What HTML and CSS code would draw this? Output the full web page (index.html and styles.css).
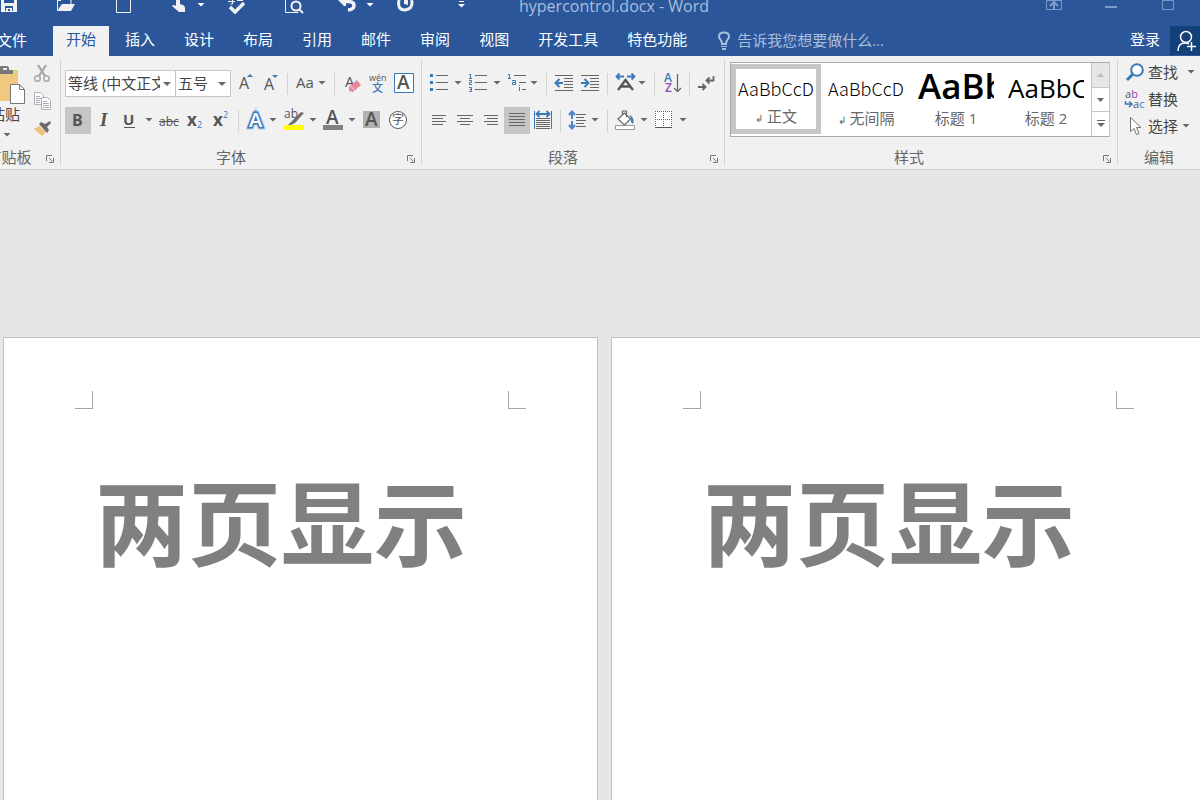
FILE: index.html
```html
<!DOCTYPE html>
<html lang="zh-CN">
<head>
<meta charset="utf-8">
<title>hypercontrol.docx - Word</title>
<link rel="stylesheet" href="styles.css">
</head>
<body>
<svg class="defs" width="0" height="0" aria-hidden="true"><defs>
  <path id="caret" d="M-3.5 0h7L0 3.5z"/>
  <g id="launch" fill="none" stroke="#777"><path d="M.5 6V.5H6"/><path d="M3 3l3.500 3.500"/><path d="M7.500 3v4.500H3"/></g>
</defs></svg>

<header class="titlebar">
  <div class="quick">
    <button aria-label="保存"><svg viewBox="-20 0 57 14"><path fill="#f1f1f1" d="M1 0h3v3h10V0h3v12H1z"/><path fill="#2b579a" d="M5 6h8v5H5z"/><path fill="#f1f1f1" d="M6 8h6v3h-2V9H8v2H6z"/></svg></button>
    <button aria-label="打开"><svg viewBox="37 0 57 14"><path fill="none" stroke="#f1f1f1" d="M57.500 0v10.500M57 .5h4M70 0h1v4"/><path fill="#f1f1f1" d="M62 4h13l-4 7H57z"/></svg></button>
    <button aria-label="新建"><svg viewBox="94 0 57 14"><path fill="none" stroke="#f1f1f1" d="M116.500 0v12.500h14V0"/></svg></button>
    <button aria-label="触摸模式"><svg viewBox="151 0 57 14"><path fill="#f1f1f1" d="M176 0h4v4l3 1q2 1 2 3v4h-6l-7-6q1-2 4 0z"/><use href="#caret" x="201" y="3" fill="#fff"/></svg></button>
    <button aria-label="拼写检查"><svg viewBox="208 0 57 14"><path fill="none" stroke="#f1f1f1" stroke-width="3.500" d="M230 7l5 5 9-9"/><path fill="none" stroke="#f1f1f1" d="M228 1.500h7M232.500 0v4h-2M237 .5h6"/></svg></button>
    <button aria-label="打印预览"><svg viewBox="265 0 57 14"><path fill="none" stroke="#f1f1f1" d="M285.500 0v12.500h13"/><circle cx="296" cy="6" r="4.500" fill="none" stroke="#f1f1f1" stroke-width="2"/><path stroke="#f1f1f1" stroke-width="2" d="M299 9l4 4"/></svg></button>
    <button aria-label="撤消"><svg viewBox="322 0 57 14"><path fill="#f1f1f1" d="M338 0h8v6h-2z"/><path fill="none" stroke="#f1f1f1" stroke-width="3.500" d="M344 1.500h4q6 0 6 4 0 4-6 4.500"/><use href="#caret" x="370" y="3" fill="#fff"/></svg></button>
    <button aria-label="重复"><svg viewBox="379 0 57 14"><path fill="none" stroke="#f1f1f1" stroke-width="3" d="M399 0q-2 10 6 10 7-1 7-7 0-2-1-3"/><path fill="#f1f1f1" d="M404 0h4v5l-4-1z"/></svg></button>
    <button aria-label="自定义快速访问工具栏"><svg viewBox="436 0 57 14"><path stroke="#fff" d="M459 1.500h5"/><path fill="#fff" d="M458 4h7l-3.500 3.500z"/></svg></button>
  </div>
  <h1>hypercontrol.docx - Word</h1>
  <div class="window">
    <button aria-label="功能区显示选项"><svg viewBox="1025 0 57 14"><path fill="none" stroke="#7f9cc8" d="M1046.500 .5h15v9h-15z"/><path stroke="#7f9cc8" stroke-width="2" fill="none" d="M1054 9V2M1050 6l4-4 4 4"/></svg></button>
    <button aria-label="最小化"><svg viewBox="1082 0 57 14"><path fill="#7f9cc8" d="M1105 6h12v2h-12z"/></svg></button>
    <button aria-label="最大化"><svg viewBox="1139 0 57 14"><path fill="none" stroke="#7f9cc8" d="M1162.500 .5h11v9h-11z"/></svg></button>
  </div>
</header>

<nav class="tabs">
  <button class="tab file">文件</button>
  <button class="tab active">开始</button>
  <button class="tab">插入</button>
  <button class="tab">设计</button>
  <button class="tab">布局</button>
  <button class="tab">引用</button>
  <button class="tab">邮件</button>
  <button class="tab">审阅</button>
  <button class="tab">视图</button>
  <button class="tab">开发工具</button>
  <button class="tab">特色功能</button>
  <label class="tell">
    <svg width="14" height="20" viewBox="0 0 14 20"><path fill="none" stroke="#a9bedd" stroke-width="2" d="M5 13q0-3-2-5-1-1-1-2.500Q2 1.500 7 1.500t5 4Q12 7 11 8 9 10 9 13z"/><path fill="#a9bedd" d="M4 15h6v1H4zM5 17h4v2H5z"/></svg>
    <input type="text" aria-label="告诉我您想要做什么" placeholder="告诉我您想要做什么...">
  </label>
  <button class="signin">登录</button>
  <button class="share" aria-label="共享"><svg width="30" height="29" viewBox="1170 26 30 29"><g fill="none" stroke="#fff" stroke-width="1.500"><circle cx="1186" cy="37" r="5.500"/><path d="M1178 51q0-8 7-8 3 0 4 1M1191.500 42v9M1187 46.500h9"/></g></svg></button>
</nav>

<main class="ribbon">
  <section class="group clipboard">
    <div class="body">
      <button class="paste"><svg width="46" height="42" viewBox="-18 62 46 42"><path fill="#efc97f" d="M-12 68h30v31h-30z"/><path fill="#777" d="M-5 68h18v4H-5zM-2 66q0-2 4-2h4q3 0 3 2v3H-2z"/><path fill="#f1f1f1" d="M3 66h4v2H3z"/><path fill="#fff" stroke="#777" d="M10.500 82.500h9l5 5v14h-14z"/><path fill="none" stroke="#777" d="M19.500 82.500v5h5"/></svg><span>粘贴</span><svg width="46" height="10" viewBox="-18 126 46 10"><use href="#caret" x="7" y="131" fill="#666"/></svg></button>
      <div class="stack">
        <button aria-label="剪切"><svg width="26" height="27" viewBox="29 60 26 27"><g fill="none" stroke="#a9a9a9" stroke-width="1.500"><circle cx="37.500" cy="78.500" r="2.800"/><circle cx="46.500" cy="78.500" r="2.800"/></g><path stroke="#a9a9a9" stroke-width="2.300" d="M38 65l7 11M46 65l-7 11"/></svg></button>
        <button aria-label="复制"><svg width="26" height="27" viewBox="29 87 26 27"><g fill="#fff" stroke="#b0b0b0"><path d="M34.500 92.500h6l3 3v9h-9z"/><path d="M41.500 97.500h6l3 3v9h-9z"/></g><path fill="none" stroke="#b0a6b8" d="M36 96.500h4M36 98.500h5M36 100.500h4M36 102.500h4M43 101.500h4M43 103.500h6M43 105.500h6M43 107.500h6"/></svg></button>
        <button aria-label="格式刷"><svg width="26" height="27" viewBox="29 114 26 27"><path fill="#efc27c" d="M34 129l5-3 7 6-4 4z"/><path fill="#6b6b6b" d="M39 124l2-2 4 2 5-3 1 2-4 4 2 3-2 3z"/></svg></button>
      </div>
    </div>
    <footer><h2>剪贴板</h2><button class="launch" aria-label="剪贴板设置"><svg width="9" height="9"><use href="#launch"/></svg></button></footer>
  </section>

  <section class="group font">
    <div class="row">
      <span class="combo family"><select aria-label="字体"><option>等线 (中文正文)</option></select></span>
      <span class="combo size"><select aria-label="字号"><option>五号</option></select></span>
      <button aria-label="增大字号"><svg width="25" height="27" viewBox="235 70 25 27"><text class="g md" x="239" y="89" font-size="16">A</text><path fill="#3b78b8" d="M247 77l3-3 3 3z"/></svg></button>
      <button aria-label="减小字号"><svg width="25" height="27" viewBox="260 70 25 27"><text class="g md" x="264" y="90" font-size="16">A</text><path fill="#3b78b8" d="M272 75h6l-3 3z"/></svg></button>
      <i class="sep"></i>
      <button aria-label="更改大小写"><svg width="42" height="27" viewBox="290 70 42 27"><text class="g md" x="296" y="88" font-size="15">Aa</text><use href="#caret" x="322" y="81"/></svg></button>
      <i class="sep"></i>
      <button aria-label="清除格式"><svg width="27" height="27" viewBox="337 70 27 27"><text class="g md" x="345" y="87" font-size="15">A</text><path fill="#e8879a" d="M349 87l8-7 4 5-8 7-4-1z"/><path stroke="#f7d5dc" d="M351 86l4 5"/></svg></button>
      <button aria-label="拼音指南"><svg width="26" height="27" viewBox="364 70 26 27"><text class="g" x="369" y="81" font-size="9">wén</text><text x="372" y="92" font-size="11" fill="#3b78b8" class="g md">文</text></svg></button>
      <button aria-label="字符边框"><svg width="27" height="27" viewBox="390 70 27 27"><path fill="#fff" stroke="#3b78b8" d="M394.500 73.500h19v19h-19z"/><text class="g sb" x="397" y="89" font-size="19">A</text></svg></button>
    </div>
    <div class="row">
      <button class="on" aria-label="加粗"><svg width="26" height="27" viewBox="65 107 26 27"><text class="g bd" x="72" y="126" font-size="16">B</text></svg></button>
      <button aria-label="倾斜"><svg width="26" height="27" viewBox="91 107 26 27"><text class="g serif" x="100" y="126" font-size="19">I</text></svg></button>
      <button aria-label="下划线"><svg width="38" height="27" viewBox="117 107 38 27"><text class="g bd" x="123" y="125" font-size="15">U</text><path stroke="#555" d="M124 127.500h11"/><use href="#caret" x="149" y="118"/></svg></button>
      <button aria-label="删除线"><svg width="27" height="27" viewBox="155 107 27 27"><text class="g" x="159" y="126" font-size="12">abc</text><path stroke="#555" d="M159 121.500h20"/></svg></button>
      <button aria-label="下标"><svg width="26" height="27" viewBox="182 107 26 27"><text class="g bd" x="187" y="126" font-size="17">x</text><text class="g md" x="197" y="128" font-size="9" fill="#3b78b8">2</text></svg></button>
      <button aria-label="上标"><svg width="28" height="27" viewBox="208 107 28 27"><text class="g bd" x="213" y="126" font-size="17">x</text><text class="g md" x="223" y="118" font-size="9" fill="#3b78b8">2</text></svg></button>
      <i class="sep"></i>
      <button aria-label="文本效果"><svg width="38" height="27" viewBox="241 107 38 27"><text class="g sb" x="249" y="127" font-size="20" fill="#fff" stroke="#b9d6f2" stroke-width="5">A</text><text class="g sb" x="249" y="127" font-size="20" fill="#fff" stroke="#3b78b8" stroke-width="3">A</text><text class="g sb" x="249" y="127" font-size="20" fill="#fff">A</text><use href="#caret" x="273" y="118"/></svg></button>
      <button aria-label="突出显示"><svg width="40" height="27" viewBox="279 107 40 27"><text class="g md" x="284" y="118" font-size="12">ab</text><path fill="#ff0" d="M284 125h20v5h-20z"/><path fill="#707070" d="M288 125l5-5 8-8 3 1-9 10-4 2z"/><use href="#caret" x="313" y="118"/></svg></button>
      <button aria-label="字体颜色"><svg width="39" height="27" viewBox="319 107 39 27"><text class="g sb" x="326" y="124" font-size="19">A</text><path fill="#808080" d="M323 125h20v5h-20z"/><use href="#caret" x="352" y="118"/></svg></button>
      <button aria-label="字符底纹"><svg width="27" height="27" viewBox="358 107 27 27"><path fill="#b1b1b1" d="M363 111h17v17h-17z"/><text class="g sb" x="365" y="126" font-size="19">A</text></svg></button>
      <button aria-label="带圈字符"><svg width="26" height="27" viewBox="385 107 26 27"><circle cx="398" cy="120" r="8.500" fill="#fff" stroke="#555"/><text class="g" x="392" y="124" font-size="12">字</text></svg></button>
    </div>
    <footer><h2>字体</h2><button class="launch" aria-label="字体设置"><svg width="9" height="9"><use href="#launch"/></svg></button></footer>
  </section>

  <section class="group para">
    <div class="row">
      <button aria-label="项目符号"><svg width="38" height="27" viewBox="426 70 38 27"><path fill="#3b78b8" d="M430 74h3v3h-3zM430 81h3v3h-3zM430 88h3v3h-3z"/><path stroke="#666" d="M436 75.500h12M436 82.500h12M436 89.500h12"/><use href="#caret" x="458" y="81"/></svg></button>
      <button aria-label="编号"><svg width="39" height="27" viewBox="464 70 39 27"><path fill="none" stroke="#3b78b8" d="M469 74.500h1.500v4M469 78.500h3M469 80.500h2.500v2h-2v2h2.500M469 87.500h2.500v4H469M469.500 89.500h2"/><path stroke="#666" d="M475 75.500h12M475 82.500h12M475 89.500h12"/><use href="#caret" x="497" y="81"/></svg></button>
      <button aria-label="多级列表"><svg width="41" height="27" viewBox="503 70 41 27"><path fill="none" stroke="#3b78b8" d="M508 74.500h1.500v4M508 78.500h3M512 80.500h3.500v4h-3v-2h3M519.500 87v4M519.500 85v1"/><path stroke="#666" d="M514 75.500h12M519 82.500h7M522 89.500h4"/><use href="#caret" x="534" y="81"/></svg></button>
      <i class="sep"></i>
      <button aria-label="减少缩进量"><svg width="28" height="27" viewBox="549 70 28 27"><path stroke="#666" d="M555 75.500h18M564 78.500h9M564 81.500h9M564 84.500h9M564 87.500h9M555 90.500h18"/><path fill="none" stroke="#3b78b8" stroke-width="2" d="M563 83h-7M559.500 79l-4 4 4 4"/></svg></button>
      <button aria-label="增加缩进量"><svg width="28" height="27" viewBox="577 70 28 27"><path stroke="#666" d="M581 75.500h18M590 78.500h9M590 81.500h9M590 84.500h9M590 87.500h9M581 90.500h18"/><path fill="none" stroke="#3b78b8" stroke-width="2" d="M581 83h7M584.500 79l4 4-4 4"/></svg></button>
      <i class="sep"></i>
      <button aria-label="中文版式"><svg width="42" height="27" viewBox="610 70 42 27"><path fill="none" stroke="#555" stroke-width="2.300" d="M618 90l7.500-10 7.500 10M621 86.500h9"/><path fill="none" stroke="#3b78b8" stroke-width="1.800" d="M624 76.500h-7M619.500 73.500l-3 3 3 3M627 76.500h7M631.500 73.500l3 3-3 3"/><use href="#caret" x="642" y="81"/></svg></button>
      <i class="sep"></i>
      <button aria-label="排序"><svg width="30" height="27" viewBox="657 70 30 27"><text class="g sb" x="664" y="82" font-size="12" fill="#3b78b8">A</text><text class="g sb" x="665" y="92" font-size="12" fill="#8e4bb0">Z</text><path fill="none" stroke="#666" stroke-width="1.300" d="M677.500 74v17M674 88l3.500 3.500L681 88"/></svg></button>
      <i class="sep"></i>
      <button aria-label="显示编辑标记"><svg width="28" height="27" viewBox="692 70 28 27"><path fill="none" stroke="#666" stroke-width="1.800" d="M713.500 76v4.500H707M709.500 77.500l-3 3 3 3M698 87h7M702.500 84l3 3-3 3"/></svg></button>
    </div>
    <div class="row">
      <button aria-label="左对齐"><svg width="26" height="27" viewBox="426 107 26 27"><path stroke="#666" d="M432 115.500h14M432 118.500h11M432 121.500h14M432 124.500h11"/></svg></button>
      <button aria-label="居中"><svg width="26" height="27" viewBox="452 107 26 27"><path stroke="#666" d="M457 115.500h16M460 118.500h10M457 121.500h16M460 124.500h10"/></svg></button>
      <button aria-label="右对齐"><svg width="26" height="27" viewBox="478 107 26 27"><path stroke="#666" d="M484 115.500h14M487 118.500h11M484 121.500h14M487 124.500h11"/></svg></button>
      <button class="on" aria-label="两端对齐"><svg width="26" height="27" viewBox="504 107 26 27"><path stroke="#666" d="M509 113.500h16M509 116.500h16M509 119.500h16M509 122.500h16M509 125.500h16"/></svg></button>
      <button aria-label="分散对齐"><svg width="28" height="27" viewBox="530 107 28 27"><path stroke="#3b78b8" d="M534.500 111v18M551.500 111v18"/><path fill="none" stroke="#3b78b8" stroke-width="1.800" d="M537 114h12M539.500 111l-3 3 3 3M546.500 111l3 3-3 3"/><path stroke="#666" d="M536 118.500h14M536 120.500h14M536 122.500h14M536 124.500h14M536 126.500h14M536 128.500h14"/></svg></button>
      <i class="sep"></i>
      <button aria-label="行距"><svg width="42" height="27" viewBox="563 107 42 27"><path fill="none" stroke="#4a84c8" stroke-width="2" d="M572 119v-7M569 115l3-3.500 3 3.500M572 121v7M569 125l3 3.500 3-3.500"/><path stroke="#666" d="M576 114.500h10M576 117.500h8M576 120.500h10M576 123.500h8M576 126.500h10"/><use href="#caret" x="595" y="118"/></svg></button>
      <i class="sep"></i>
      <button aria-label="底纹"><svg width="40" height="27" viewBox="610 107 40 27"><path fill="#fff" stroke="#666" stroke-width="1.200" d="M618 119l6.500-6 6 6-6 6z"/><path fill="none" stroke="#666" stroke-width="1.200" d="M622.500 115v-4h4v6"/><path fill="#3b78b8" d="M629 115q6 2 4 9l-2-2v-4z"/><path fill="#fff" stroke="#999" d="M615.500 125.500h19v4h-19z"/><use href="#caret" x="644" y="118"/></svg></button>
      <button aria-label="边框"><svg width="40" height="27" viewBox="650 107 40 27"><path fill="#fff" d="M655 111h17v17h-17z"/><path fill="none" stroke="#666" stroke-dasharray="1 1" d="M655 111.500h17M655 119.500h17M655.500 111v17M663.500 111v17M671.500 111v17"/><path stroke="#555" d="M655 127.500h17"/><use href="#caret" x="683" y="118"/></svg></button>
    </div>
    <footer><h2>段落</h2><button class="launch" aria-label="段落设置"><svg width="9" height="9"><use href="#launch"/></svg></button></footer>
  </section>

  <section class="group styles">
    <div class="gallery">
      <button class="style on"><span class="sample">AaBbCcDd</span><span class="name"><small>↲</small> 正文</span></button>
      <button class="style"><span class="sample">AaBbCcDd</span><span class="name"><small>↲</small> 无间隔</span></button>
      <button class="style"><span class="sample h1">AaBb</span><span class="name">标题 1</span></button>
      <button class="style"><span class="sample h2">AaBbC</span><span class="name">标题 2</span></button>
      <div class="scroll">
        <button class="off" aria-label="向上滚动"><svg width="7" height="4"><path fill="#bbb" d="M0 4h7L3.500 0z"/></svg></button>
        <button aria-label="向下滚动"><svg width="7" height="4"><path fill="#666" d="M0 0h7L3.500 4z"/></svg></button>
        <button aria-label="更多样式"><svg width="8" height="8"><path fill="#666" d="M0 0h8v1H0zM0 3h8L4 7z"/></svg></button>
      </div>
    </div>
    <footer><h2>样式</h2><button class="launch" aria-label="样式窗格"><svg width="9" height="9"><use href="#launch"/></svg></button></footer>
  </section>

  <section class="group edit">
    <div class="list">
      <button><svg width="24" height="27" viewBox="1123 58 24 27"><circle cx="1137" cy="70" r="5.800" fill="#fff" stroke="#3b78b8" stroke-width="2"/><path stroke="#3b78b8" stroke-width="3" d="M1132.500 74.500l-5.500 5.500"/></svg>查找<svg class="end" width="8" height="4" viewBox="-4 0 8 4"><use href="#caret"/></svg></button>
      <button><svg width="24" height="27" viewBox="1123 85 24 27"><text class="g md" x="1125" y="98" font-size="11">a<tspan fill="#8e4bb0">b</tspan></text><text class="g md" x="1133" y="108" font-size="11">a<tspan fill="#3b78b8">c</tspan></text><path fill="none" stroke="#3b78b8" stroke-width="1.500" d="M1125.500 101v3h6M1129 101.500l3 2.500-3 3"/></svg>替换</button>
      <button><svg width="24" height="27" viewBox="1123 112 24 27"><path fill="#fff" stroke="#777" d="M1130.500 117.500v14l3.500-3 2.500 6 2.500-1-2.500-6h4.500z"/></svg>选择<svg width="14" height="4" viewBox="-7 0 14 4"><use href="#caret"/></svg></button>
    </div>
    <footer><h2>编辑</h2></footer>
  </section>
</main>

<div class="canvas">
  <article class="page"><div class="marks"><i></i><i></i></div><p>两页显示</p></article>
  <article class="page"><div class="marks"><i></i><i></i></div><p>两页显示</p></article>
</div>
</body>
</html>
```
FILE: styles.css
```css
* { box-sizing: border-box; }
body {
  margin: 0;
  height: 100vh;
  display: flex;
  flex-direction: column;
  overflow: hidden;
  background: #e6e6e6;
  color: #444;
  font: 15px/20px "Open Sans", "Noto Sans CJK SC", sans-serif;
}
.defs { display: none; }
button, input, select { font: inherit; color: inherit; border: 0; margin: 0; padding: 0; background: none; }
svg { display: block; flex: none; fill: #666; }
h1, h2, p { margin: 0; font-weight: 400; }
.g { fill: #555; font-family: "Open Sans", "Noto Sans CJK SC", sans-serif; }
.g[fill="#3b78b8"] { fill: #3b78b8; }
.g[fill="#8e4bb0"] { fill: #8e4bb0; }
.g[fill="#fff"] { fill: #fff; }
.md { font-weight: 500; }
.sb { font-weight: 600; }
.bd { font-weight: 700; }
.serif { font-family: "Liberation Serif", serif; font-style: italic; font-weight: 700; }

.titlebar { flex: none; height: 26px; display: flex; background: #2b579a; }
.quick { display: flex; flex: none; margin-left: -20px; }
.quick button, .window button { width: 57px; height: 14px; }
.quick svg, .window svg { width: 57px; height: 14px; }
.titlebar h1 { flex: 1; padding-left: 26px; font-size: 16px; line-height: 12px; color: #a9bedd; white-space: nowrap; }
.window { display: flex; padding-right: 4px; }

.tabs { flex: none; height: 30px; display: flex; gap: 3px; background: #2b579a; color: #fff; }
.tab { flex: none; padding: 0 13px 4px; white-space: nowrap; }
.file { margin: 0 10px 0 -16px; padding-bottom: 2px; }
.active { background: #f1f1f1; color: #2b579a; }
.tell { flex: 1; display: flex; align-items: center; gap: 6px; padding-left: 14px; }
.tell input { flex: 1; min-width: 0; outline: 0; padding-bottom: 2px; }
.tell input::placeholder { color: #a9bedd; opacity: 1; }
.signin { flex: none; padding: 0 7px 4px; }
.share { flex: none; width: 30px; height: 29px; background: #124078; }

.ribbon { flex: none; height: 114px; display: flex; padding: 4px 0; background: #f1f1f1; border-bottom: 1px solid #d2d2d2; }
.group { flex: none; display: flex; flex-direction: column; border-right: 1px solid #d2d2d2; }
.group footer { display: flex; align-items: center; margin-top: auto; margin-bottom: -2px; height: 20px; padding-right: 5px; color: #666; }
.group h2 { flex: 1; padding-right: 10px; font-size: 15px; line-height: 20px; text-align: center; white-space: nowrap; }
.launch { padding-top: 4px; }

.clipboard { width: 61px; }
.clipboard .body { display: flex; }
.clipboard footer { margin-left: -18px; }
.paste { width: 46px; margin-left: -18px; text-align: center; }
.paste span { display: block; height: 22px; line-height: 16px; }
.stack { display: flex; flex-direction: column; padding-left: 1px; }

.font { width: 361px; padding-left: 4px; }
.para { width: 303px; padding-left: 4px; }
.row { display: flex; align-items: center; height: 27px; margin-top: 10px; }
.sep { flex: none; width: 1px; height: 22px; margin: 0 2px; background: #d2d2d2; }
.on { background: #c6c6c6; }
.combo { flex: none; display: flex; position: relative; height: 27px; background: #fff; border: 1px solid #c6c6c6; }
.combo::after { content: ""; position: absolute; right: 4px; top: 11px; border: 4px solid transparent; border-top-color: #666; border-bottom: 0; }
.combo select { width: 100%; appearance: none; padding: 0 15px 2px 2px; outline: 0; overflow: hidden; }
.family { width: 111px; }
.size { width: 56px; margin: 0 4px 0 -1px; }

.styles { flex: 1; min-width: 0; }
.gallery { display: flex; height: 75px; margin: 2px 7px 0 5px; background: #fff; border: 1px solid #ababab; border-right-color: #c6c6c6; }
.style { flex: 1; min-width: 0; display: flex; flex-direction: column; align-items: stretch; margin: 1px 0 2px; padding: 0 7px; border: 0 solid #c6c6c6; }
.style.on { background: #fff; border-width: 5px; padding: 0 2px; }
.sample { height: 43px; line-height: 48px; overflow: hidden; text-align: left; white-space: nowrap; color: #000; font-family: "Noto Sans CJK SC", sans-serif; font-size: 18px; font-weight: 300; }
.on .sample { height: 38px; line-height: 38px; }
.sample.h1 { font-family: "Open Sans", sans-serif; font-size: 35px; font-weight: 600; line-height: 44px; }
.sample.h2 { font-family: "Open Sans", sans-serif; font-size: 26px; font-weight: 400; line-height: 48px; }
.name { color: #666; white-space: nowrap; line-height: 22px; }
.name small { font-size: 10px; }
.scroll { flex: none; width: 18px; display: flex; flex-direction: column; border-left: 1px solid #c6c6c6; }
.scroll button { flex: 1; display: flex; align-items: center; justify-content: center; border-top: 1px solid #c6c6c6; }
.scroll .off { background: #e6e6e6; border-top: 0; }

.edit { width: 82px; border: 0; }
.list { display: flex; flex-direction: column; margin-top: -2px; padding-left: 5px; }
.list button { display: flex; align-items: center; gap: 1px; height: 27px; }
.list .end { margin-left: 8px; }
.edit footer { padding: 0; }
.edit h2 { padding: 0; }

.canvas { flex: 1; display: flex; gap: 13px; padding: 167px 0 0 3px; overflow: hidden; }
.page { flex: none; width: 595px; background: #fff; border: 1px solid #c0c0c0; border-bottom: 0; padding: 53px 71px 0; }
.marks { display: flex; justify-content: space-between; }
.marks i { width: 18px; height: 18px; border: 1px solid #a6a6a6; border-width: 0 1px 1px 0; }
.marks i + i { border-width: 0 0 1px 1px; }
.page p { margin: 40px 0 0 20px; color: #808080; font: 700 93px/140px "Noto Sans CJK SC", sans-serif; white-space: nowrap; }
```
